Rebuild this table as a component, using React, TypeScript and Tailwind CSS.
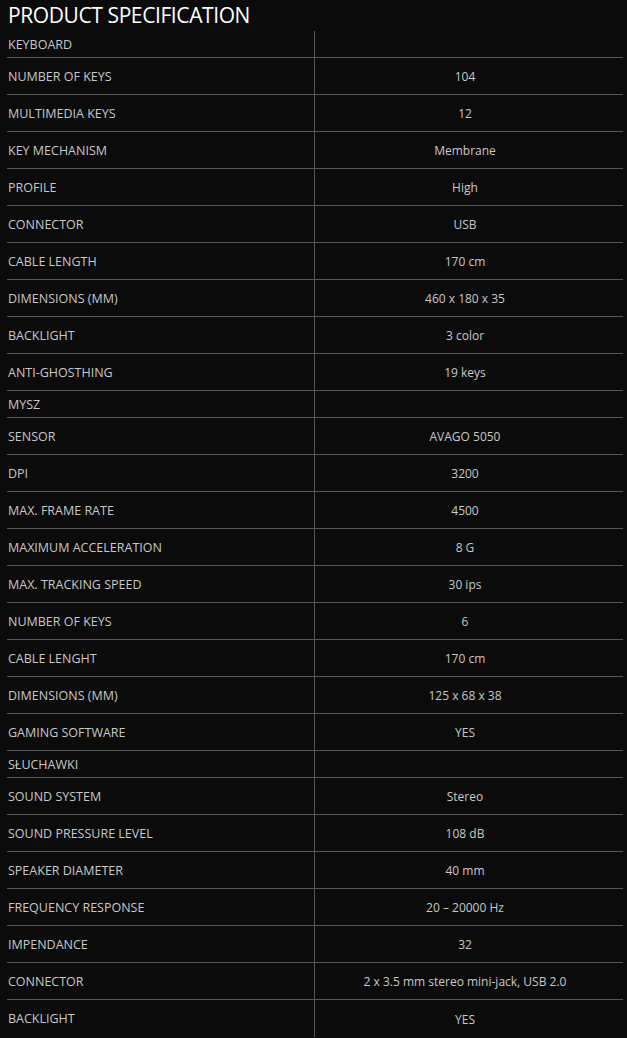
const rows: [string, string | null][] = [
  ['KEYBOARD', null],
  ['NUMBER OF KEYS', '104'],
  ['MULTIMEDIA KEYS', '12'],
  ['KEY MECHANISM', 'Membrane'],
  ['PROFILE', 'High'],
  ['CONNECTOR', 'USB'],
  ['CABLE LENGTH', '170 cm'],
  ['DIMENSIONS (MM)', '460 x 180 x 35'],
  ['BACKLIGHT', '3 color'],
  ['ANTI-GHOSTHING', '19 keys'],
  ['MYSZ', null],
  ['SENSOR', 'AVAGO 5050'],
  ['DPI', '3200'],
  ['MAX. FRAME RATE', '4500'],
  ['MAXIMUM ACCELERATION', '8 G'],
  ['MAX. TRACKING SPEED', '30 ips'],
  ['NUMBER OF KEYS', '6'],
  ['CABLE LENGHT', '170 cm'],
  ['DIMENSIONS (MM)', '125 x 68 x 38'],
  ['GAMING SOFTWARE', 'YES'],
  ['SŁUCHAWKI', null],
  ['SOUND SYSTEM', 'Stereo'],
  ['SOUND PRESSURE LEVEL', '108 dB'],
  ['SPEAKER DIAMETER', '40 mm'],
  ['FREQUENCY RESPONSE', '20 – 20000 Hz'],
  ['IMPENDANCE', '32'],
  ['CONNECTOR', '2 x 3.5 mm stereo mini-jack, USB 2.0'],
  ['BACKLIGHT', 'YES'],
];

export default function App() {
  return (
    <div className="min-h-[1038px] bg-[#0b0b0b] font-['Open_Sans',sans-serif]">
      <h2 className="pl-2 h-[31px] text-[21px] leading-[31px] text-white tracking-[-0.4px]">
        PRODUCT SPECIFICATION
      </h2>
      <div className="ml-[7px] w-[616px]">
        {rows.map(([label, value], i) => {
          const isHead = value === null;
          const isLast = i === rows.length - 1;
          return (
            <div
              key={i}
              className={`flex text-[#c8c8c8] ${isHead ? 'h-[27px]' : 'h-[37px]'} ${isLast ? '' : 'border-b border-[#575757]'}`}
            >
              <div className="w-[308px] pt-[2px] pl-px flex items-center border-r border-[#575757] text-[12.5px]">
                {label}
              </div>
              <div className="flex-1 pt-[2px] flex items-center justify-center pr-[8px] text-[12px]">{value}</div>
            </div>
          );
        })}
      </div>
    </div>
  );
}
